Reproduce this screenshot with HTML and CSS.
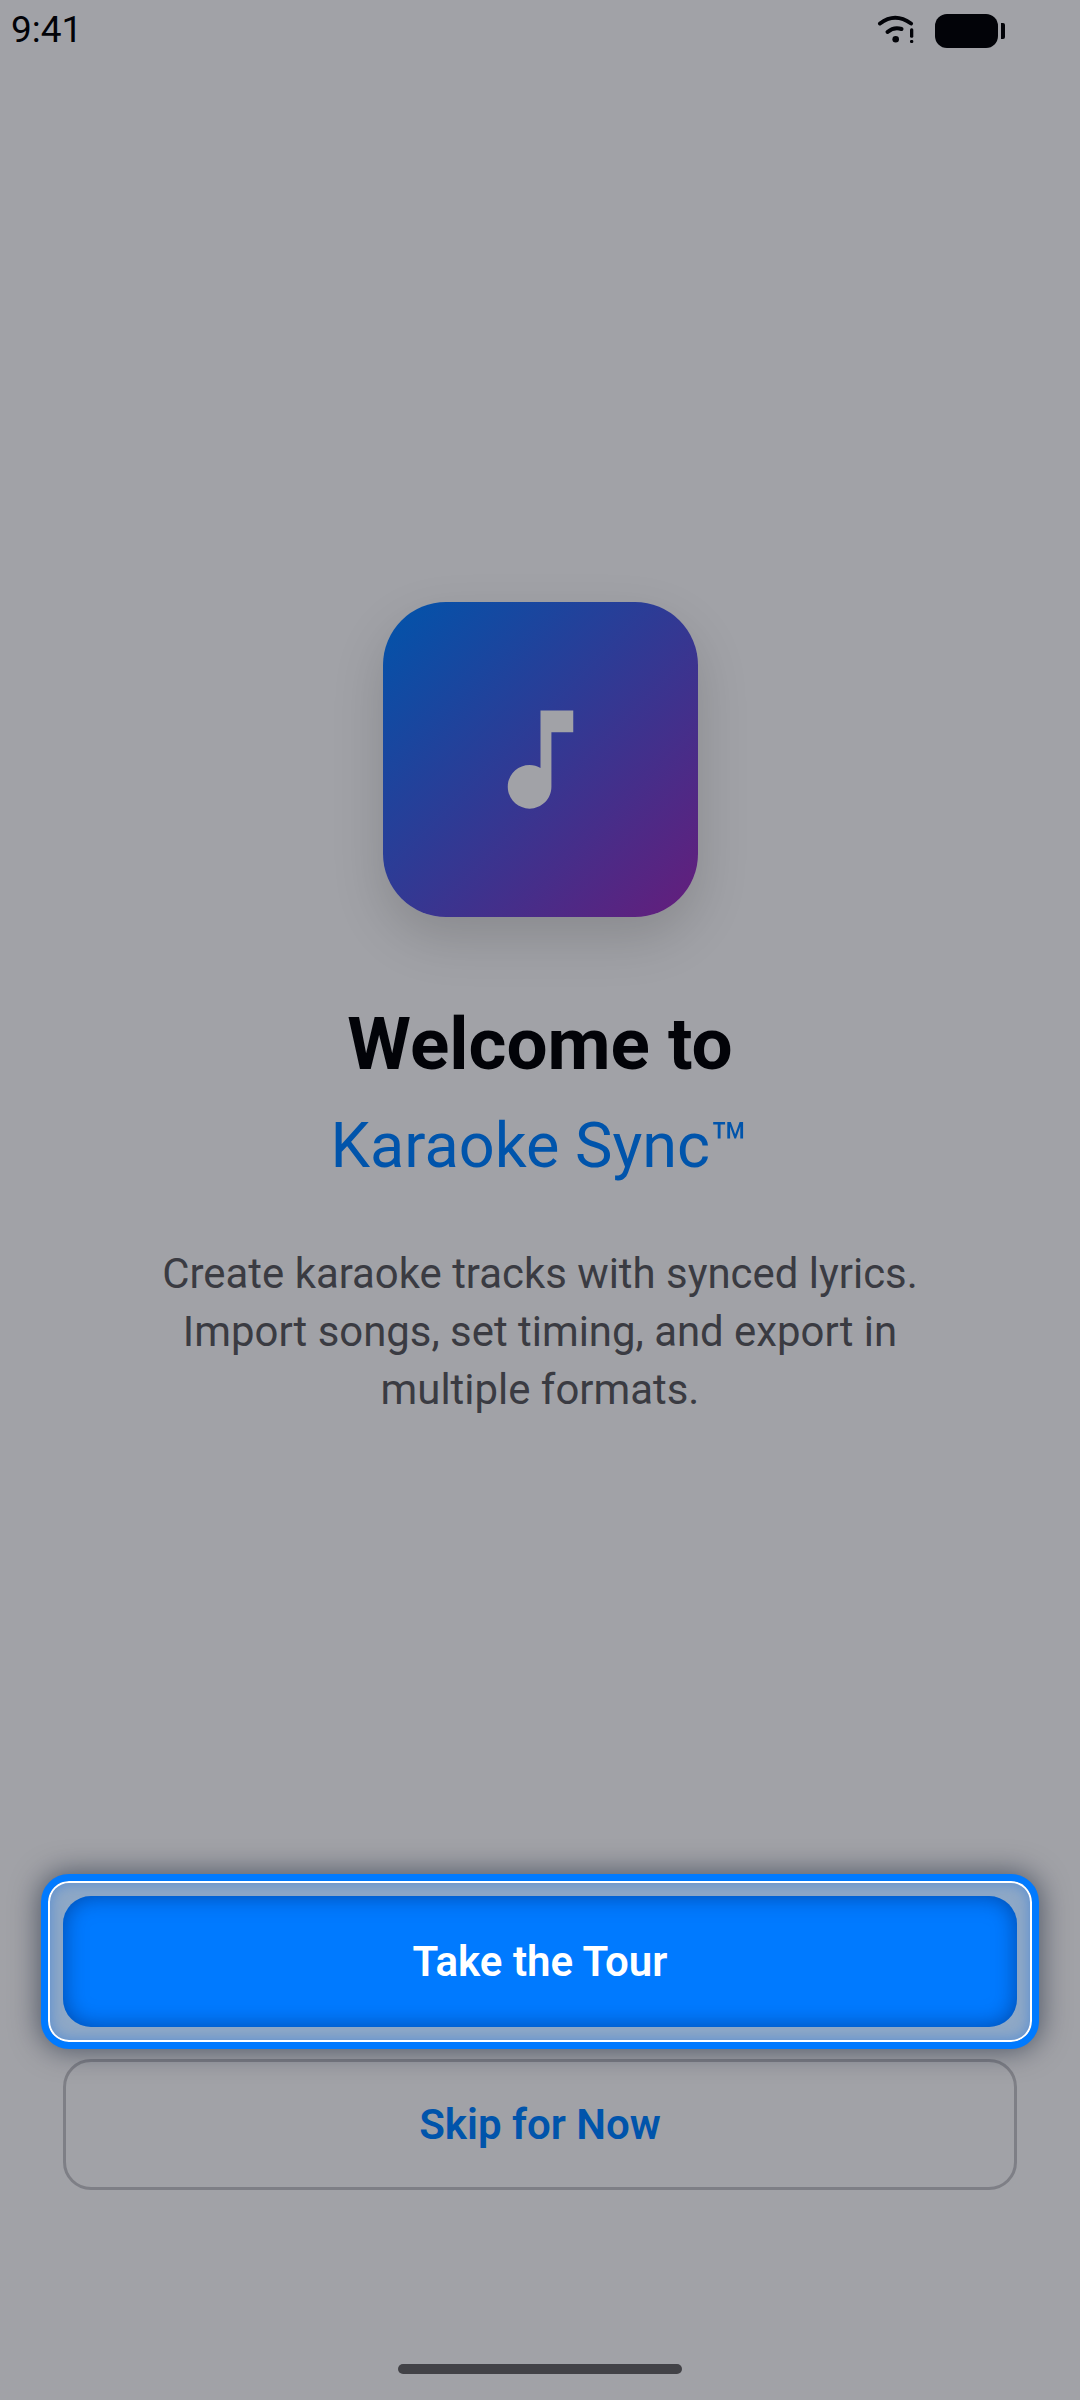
FILE: index.html
```html
<!DOCTYPE html>
<html lang="en">
<head>
<meta charset="utf-8">
<title>Karaoke Sync</title>
<link rel="stylesheet" href="styles.css">
</head>
<body>
<div class="screen">
  <header class="status">
    <span class="time">9:41</span>
    <div class="status-icons">
      <svg class="wifi" width="40" height="34" viewBox="0 0 40 34">
        <path d="M5 9.500Q20 -2 36 9.500" fill="none" stroke="#020308" stroke-width="4" stroke-linecap="round"/>
        <path d="M12.500 18Q19 12.500 26.500 15" fill="none" stroke="#020308" stroke-width="4" stroke-linecap="round"/>
        <circle cx="20.700" cy="25.300" r="3.300" fill="#020308"/>
        <rect x="35" y="14.300" width="3.300" height="9.500" rx="1.500" fill="#020308"/>
        <rect x="35" y="26" width="3.300" height="3" rx="1.200" fill="#020308"/>
      </svg>
      <div class="battery"><span class="battery-body"></span><span class="battery-cap"></span></div>
    </div>
  </header>
  <main class="hero">
    <div class="app-icon">
      <svg class="note" width="131" height="131" viewBox="0 0 24 24"><path d="M12 3v10.550c-.59-.34-1.270-.55-2-.55-2.210 0-4 1.790-4 4s1.790 4 4 4 4-1.790 4-4V7h4V3h-6z"/></svg>
    </div>
    <h1 class="title">Welcome to</h1>
    <h2 class="brand">Karaoke Sync™</h2>
    <p class="desc">Create karaoke tracks with synced lyrics.<br>Import songs, set timing, and export in<br>multiple formats.</p>
  </main>
  <section class="actions">
    <div class="focus">
      <button class="btn btn-primary">Take the Tour</button>
    </div>
    <button class="btn btn-secondary">Skip for Now</button>
  </section>
  <footer class="home"><span class="home-bar"></span></footer>
</div>
</body>
</html>
```
FILE: styles.css
```css
* { box-sizing: border-box; }
html, body { margin: 0; padding: 0; }
body { font-family: Roboto, sans-serif; background: #a1a2a7; }
.screen { width: 1080px; height: 2400px; display: flex; flex-direction: column; overflow: hidden; background: #a1a2a7; }
.status { height: 62px; padding: 0 0 0 11px; display: flex; justify-content: space-between; align-items: center; flex: none; }
.time { font-size: 37px; color: #020308; line-height: 60px; padding-bottom: 2px; }
.status-icons { display: flex; align-items: center; gap: 20px; padding-right: 75px; }
.wifi { display: block; }
.battery { display: flex; align-items: center; gap: 3px; }
.battery-body { width: 63px; height: 34px; border-radius: 12px; background: #020308; }
.battery-cap { width: 4px; height: 16px; background: #020308; border-radius: 0 2px 2px 0; }
.hero { flex: none; display: flex; flex-direction: column; align-items: center; padding-top: 540px; }
.app-icon { width: 315px; height: 315px; border-radius: 63px; background: linear-gradient(135deg, #0054ab, #651d7b); box-shadow: 0 21px 52px rgba(0,0,0,.15); display: flex; align-items: center; justify-content: center; }
.note { fill: #a1a2a7; display: block; }
.title { margin: 82px 0 0; font-size: 72.800px; line-height: 90px; font-weight: 700; color: #020308; }
.brand { margin: 15px 0 0; font-size: 63px; line-height: 84px; font-weight: 400; color: #0054ab; }
.desc { margin: 57px 0 0; font-size: 41.900px; line-height: 57.750px; color: #3a3b42; text-align: center; }
.actions { flex: none; margin-top: 478px; padding: 0 63px; display: flex; flex-direction: column; gap: 32px; }
.focus { position: relative; z-index: 0; }
.focus::before { content: ""; position: absolute; inset: -22px; z-index: -1; border-radius: 28px; border: 7px solid #007aff; background: #8ea8c6 padding-box; box-shadow: inset 0 0 0 2px #fff, inset 0 0 14px 2px rgba(0,100,230,.4), 0 0 28px 2px rgba(0,15,40,.5); }
.btn { display: block; width: 100%; height: 131px; border-radius: 28px; font-family: Roboto, sans-serif; font-size: 42px; font-weight: 600; }
.btn-primary { border: 0; background: #007aff; color: #fff; box-shadow: inset 0 0 22px rgba(0,40,110,.6); }
.btn-secondary { background: transparent; border: 3px solid #7e7f86; color: #0054ab; }
.home { flex: none; display: flex; justify-content: center; padding-top: 174px; }
.home-bar { width: 284px; height: 10px; border-radius: 5px; background: #424247; }
```
